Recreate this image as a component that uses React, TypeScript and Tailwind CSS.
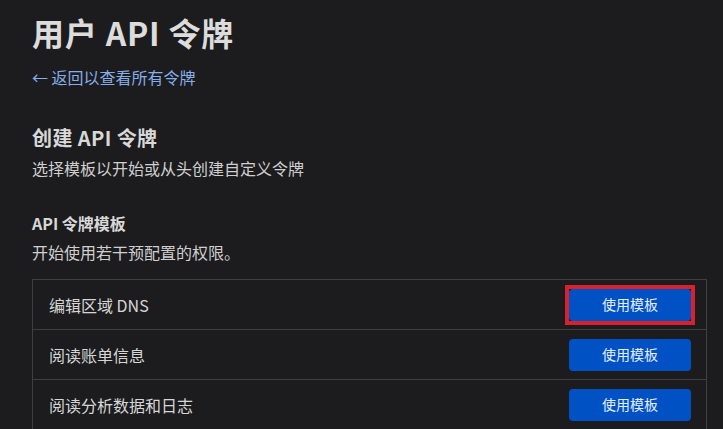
import React from "react";

const rows = ["编辑区域 DNS", "阅读账单信息", "阅读分析数据和日志"];

export default function App() {
  return (
    <div
      className="w-[723px] h-[429px] overflow-hidden bg-[#1c1c1e] text-[#d4d4d4]"
      style={{ fontFamily: '"Noto Sans CJK SC", "Noto Sans", sans-serif' }}
    >
      <div className="pl-8 pr-4 pt-3">
        <h1 className="text-[32px] leading-[40px] font-bold tracking-[0.8px] text-[#dcdcdc]">用户 API 令牌</h1>
        <a className="block mt-[13px] text-[16px] leading-[24px] text-[#86aee8]">← 返回以查看所有令牌</a>
        <h2 className="mt-[35px] text-[20px] leading-[28px] font-bold tracking-[0.4px] text-[#d8d8d8]">创建 API 令牌</h2>
        <p className="mt-1 text-[16px] leading-[24px] text-[#cfcfcf]">选择模板以开始或从头创建自定义令牌</p>
        <h3 className="mt-[31px] text-[16px] leading-[24px] font-bold text-[#d8d8d8]">API 令牌模板</h3>
        <p className="mt-[5px] text-[16px] leading-[24px] text-[#cfcfcf]">开始使用若干预配置的权限。</p>
        <div className="mt-[15px] w-[675px] border-l border-r border-[#3f3f41]">
          {rows.map((r, i) => (
            <div
              key={r}
              className="h-[50px] border-t border-[#3f3f41] flex items-center justify-between pl-4 pr-[15px]"
            >
              <span className="text-[16px] text-[#d6d6d6]">{r}</span>
              <div className="relative">
                <button className="w-[122px] h-[32px] rounded bg-[#0051c3] text-[14px] text-[#e6eeff]">
                  使用模板
                </button>
                {i === 0 && (
                  <div className="absolute -inset-1 border-4 border-[#d7222e] pointer-events-none" />
                )}
              </div>
            </div>
          ))}
        </div>
      </div>
    </div>
  );
}
